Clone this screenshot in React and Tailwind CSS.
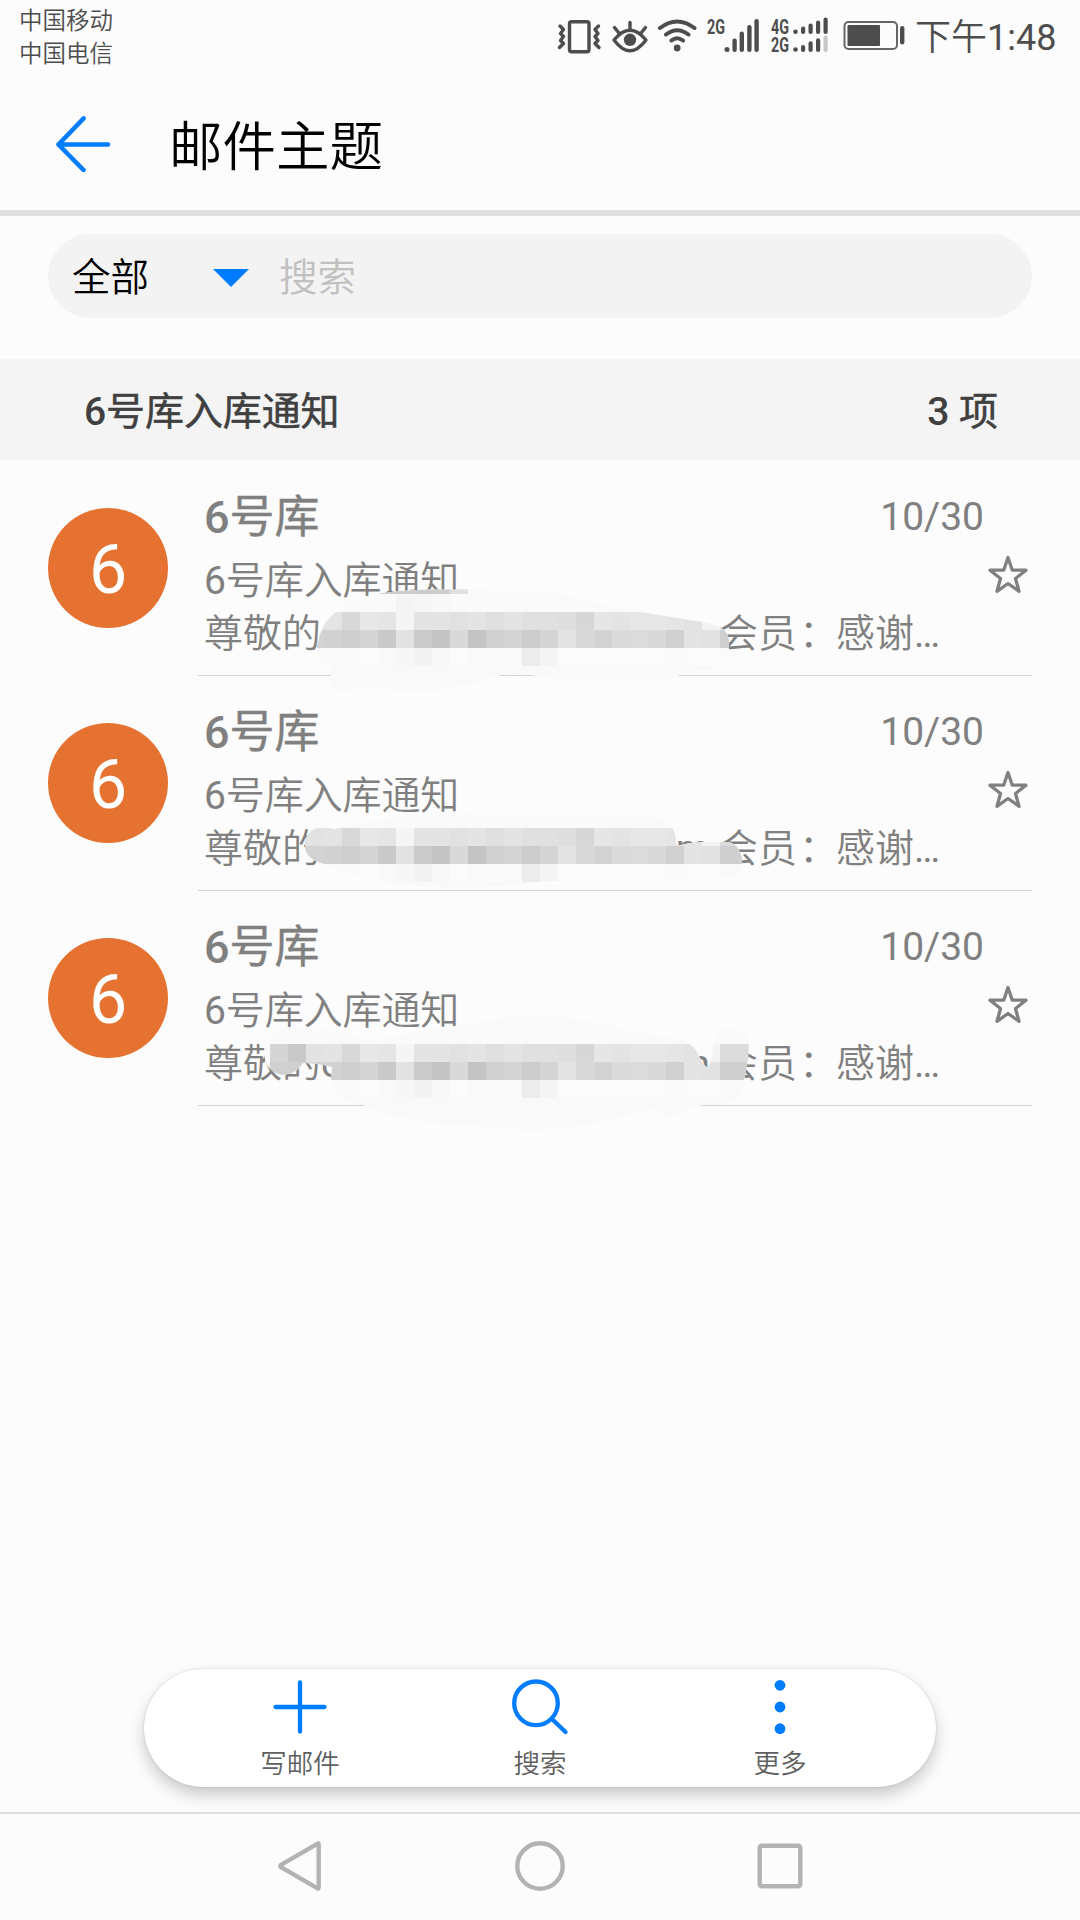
const BLUE = "#007dff"

// Shades of the pixelated mask, one entry per 18px cell
const MASK_COLUMNS = [
  [270, "#d5d5d5", "#d0d0d0", "#fafafa"],
  [288, "#c9c9c9", "#d0d0d0", "#fafafa"],
  [306, "#e2e2e2", "#d3d3d3", "#fafafa"],
  [324, "#e4e4e4", "#d1d1d1", "#fafafa"],
  [342, "#d8d8d8", "#cecece", "#fafafa"],
  [360, "#e7e7e7", "#d5d5d5", "#fbfbfb"],
  [378, "#e5e5e5", "#c9c9c9", "#f9f9f9"],
  [396, "#f5f5f5", "#e2e2e2", "#f7f7f7"],
  [414, "#e4e4e4", "#cbcbcb", "#f3f3f3"],
  [432, "#e4e4e4", "#c4c4c4", "#f8f8f8"],
  [450, "#e1e1e1", "#d9d9d9", "#fbfbfb"],
  [468, "#e4e4e4", "#c4c4c4", "#f9f9f9"],
  [486, "#dfdfdf", "#d0d0d0", "#fafafa"],
  [504, "#e4e4e4", "#d5d5d5", "#f9f9f9"],
  [522, "#e0e0e0", "#cccccc", "#ececec"],
  [540, "#e0e0e0", "#d4d4d4", "#f4f4f4"],
  [558, "#dedede", "#e3e3e3", "#fbfbfb"],
  [576, "#d7d7d7", "#d9d9d9", "#fbfbfb"],
  [594, "#e6e6e6", "#d3d3d3", "#fbfbfb"],
  [612, "#e4e4e4", "#dadada", "#fbfbfb"],
  [630, "#e7e7e7", "#dbdbdb", "#fbfbfb"],
  [648, "#e7e7e7", "#d9d9d9", "#fbfbfb"],
  [666, "#e5e5e5", "#d0d0d0", "#fafafa"],
  [684, "#e3e3e3", "#e4e4e4", "#fbfbfb"],
  [702, "#f3f3f3", "#e2e2e2", "#fbfbfb"],
  [720, "#dcdcdc", "#cfcfcf", "#f9f9f9"],
  [738, "#dcdcdc", "#cfcfcf", "#f9f9f9"],
]

const MAILS = [
  {
    id: "mask-1",
    top: 461,
    cellTop: 612,
    shadow: true,
    before: "",
    after: "",
    outline:
      "M317 645Q321 629 326 622Q334 612 342 608Q350 599 362 597Q390 590 430 589.500L520 590Q560 592 600 604L641 612L702 622Q718 625 723 629Q729 634 729 642L729 650Q722 656 717 663Q712 671 700 671L684 672Q678 676 674 678Q660 681 640 680L590 679Q570 681 550 678Q510 670 490 678Q440 694 400 690Q380 688 365 686Q345 694 334 688Q329 680 331 664Q318 662 317 650Z",
  },
  {
    id: "mask-2",
    top: 676,
    cellTop: 828,
    before: "",
    after: "m",
    outline:
      "M305 845Q306 828 322 827.500Q330 826 334 829.500L345 826Q380 820 400 816Q450 809 480 815Q530 819 580 817L650 817Q675 817 676 842L677 846Q690 842 705 842L728 842Q738 843 742 858L742 866Q738 878 725 877Q690 880 670 880L570 880Q530 882 515 885Q440 890 410 885Q350 876 325 864Q307 860 305 848Z",
  },
  {
    id: "mask-3",
    top: 891,
    cellTop: 1044,
    before: "c",
    after: "m",
    outline:
      "M264 1054Q268 1030 288 1027Q310 1027 330 1030Q360 1037 375 1040Q420 1032 450 1027Q530 1008 600 1023Q650 1036 680 1039Q694 1044 699 1056Q703 1065 708 1068Q712 1060 713 1050Q716 1028 730 1027Q745 1028 749 1040Q749 1060 744 1080Q740 1100 727 1104Q700 1104 688 1108Q672 1120 663 1114Q655 1110 648 1110Q620 1116 600 1122Q550 1132 520 1129Q430 1125 385 1114Q370 1105 350 1102Q330 1092 331 1080L332 1067Q316 1063 303 1063Q296 1075 282 1075Q266 1072 264 1054Z",
  },
]

function VibrateIcon() {
  return (
    <svg className="h-10 w-[46px]" viewBox="556 16 46 40" fill="none" stroke="#4d4d4d" strokeWidth="3.400" strokeLinecap="round" strokeLinejoin="round">
      <rect x="569.500" y="21.700" width="19.500" height="30" rx="2" />
      <path d="M560 26L563.500 29.500L560.500 33.500L563.500 36.500L560.500 40.500L563.500 43.500L559.500 47.500" />
      <path d="M598.500 26L595 29.500L598 33.500L595 36.500L598 40.500L595 43.500L599 47.500" />
    </svg>
  )
}

function EyeIcon() {
  return (
    <svg className="h-10 w-10" viewBox="610 16 40 40" fill="none" stroke="#4d4d4d" strokeWidth="3.400" strokeLinecap="round">
      <path d="M614 40Q630 20.500 646 40Q630 61.500 614 40Z" strokeLinejoin="round" />
      <circle cx="630" cy="39.800" r="6.200" fill="#4d4d4d" stroke="none" />
      <path d="M630 22.500V29M614.500 27.500L618.500 32.500M645.500 27.500L641.500 32.500" />
    </svg>
  )
}

function WifiIcon() {
  return (
    <svg className="h-10 w-10" viewBox="657 16 40 40" fill="none" stroke="#4d4d4d" strokeWidth="4" strokeLinecap="round">
      <path d="M660 28Q677 15 694.500 28M666 34.500Q677 26 688.500 34.500M671.500 40.500Q677 36 683 40.500" />
      <circle cx="677.200" cy="48" r="3.400" fill="#4d4d4d" stroke="none" />
    </svg>
  )
}

function SignalIcon() {
  return (
    <svg className="h-10 w-[54px]" viewBox="706 16 54 40" fill="#4d4d4d">
      <text x="707" y="34" textLength="18" lengthAdjust="spacingAndGlyphs" className="font-['Roboto'] text-[21px] font-bold">2G</text>
      <circle cx="727" cy="49.500" r="2.500" />
      <rect x="732.400" y="38.500" width="4.400" height="13.500" rx="2.200" />
      <rect x="739.600" y="31.500" width="4.400" height="20.500" rx="2.200" />
      <rect x="747.200" y="25" width="4.400" height="27" rx="2.200" />
      <rect x="754.400" y="19" width="4.400" height="33" rx="2.200" />
    </svg>
  )
}

function DualSignalIcon() {
  return (
    <svg className="h-10 w-[60px]" viewBox="770 16 60 40" fill="#4d4d4d">
      <text x="771" y="34" textLength="18" lengthAdjust="spacingAndGlyphs" className="font-['Roboto'] text-[21px] font-bold">4G</text>
      <text x="771" y="52" textLength="18" lengthAdjust="spacingAndGlyphs" className="font-['Roboto'] text-[21px] font-bold">2G</text>
      <circle cx="795.500" cy="31.700" r="2.300" />
      <rect x="801" y="26.500" width="4.200" height="7.500" rx="2.100" />
      <rect x="808.500" y="23.500" width="4.200" height="10.500" rx="2.100" />
      <rect x="816" y="20.500" width="4.200" height="13.500" rx="2.100" />
      <rect x="823.500" y="17.500" width="4.200" height="16.500" rx="2.100" />
      <circle cx="795.500" cy="49.500" r="2.300" />
      <rect x="801" y="45" width="4.200" height="7" rx="2.100" />
      <rect x="808.500" y="41.300" width="4.200" height="10.700" rx="2.100" />
      <rect x="816" y="38.300" width="4.200" height="13.700" rx="2.100" />
      <rect x="823.500" y="35.500" width="4.200" height="16.500" rx="2.100" fill="#c8c8c8" />
    </svg>
  )
}

function BatteryIcon() {
  return (
    <svg className="h-10 w-16" viewBox="842 16 64 40" fill="#4d4d4d">
      <rect x="844.500" y="22" width="52.500" height="27" rx="4" fill="none" stroke="#666666" strokeWidth="2" />
      <rect x="847.500" y="25" width="32.500" height="21" rx="1" />
      <rect x="900" y="26" width="4.400" height="18.500" rx="2.200" />
    </svg>
  )
}

function StatusBar() {
  return (
    <div className="flex h-[72px] items-start pl-[19px] pr-6 text-[#4d4d4d]">
      <div className="pt-[5px] text-[23.500px] leading-[33px] font-[350]">
        <p>中国移动</p>
        <p>中国电信</p>
      </div>
      <div className="ml-auto flex pt-4">
        <VibrateIcon />
        <div className="ml-2 flex">
          <EyeIcon />
        </div>
        <div className="ml-[7px] flex">
          <WifiIcon />
        </div>
        <div className="ml-[9px] flex">
          <SignalIcon />
        </div>
        <div className="ml-[10px] flex">
          <DualSignalIcon />
        </div>
        <div className="ml-3 flex">
          <BatteryIcon />
        </div>
        <p className="ml-[9px] w-[141px] whitespace-nowrap text-[36px] leading-[44px]">
          <span className="font-[350]">下午</span>1:48
        </p>
      </div>
    </div>
  )
}

function Mask({ mail }) {
  return (
    <svg
      className="pointer-events-none absolute left-[260px] h-[130px] w-[500px]"
      style={{ top: mail.cellTop - 32 - mail.top }}
      viewBox={`260 ${mail.cellTop - 32} 500 130`}
    >
      <clipPath id={mail.id}>
        <path d={mail.outline} />
      </clipPath>
      <g clipPath={`url(#${mail.id})`} shapeRendering="crispEdges">
        <rect x="260" y={mail.cellTop - 32} width="500" height="130" fill="#fafafa" />
        {mail.shadow && (
          <>
            <rect x="378" y="588" width="90" height="6" fill="#cdcdcd" />
            <rect x="450" y="588" width="18" height="6" fill="#e0e0e0" />
            <rect x="396" y="594" width="18" height="18" fill="#f4f4f4" />
            <rect x="414" y="594" width="18" height="18" fill="#f6f6f6" />
            <rect x="432" y="594" width="18" height="18" fill="#f8f8f8" />
          </>
        )}
        {MASK_COLUMNS.map(([x, upper, middle, lower]) => (
          <g key={x}>
            <rect x={x} y={mail.cellTop} width="18" height="18" fill={upper} />
            <rect x={x} y={mail.cellTop + 18} width="18" height="18" fill={middle} />
            <rect x={x} y={mail.cellTop + 36} width="18" height="18" fill={lower} />
          </g>
        ))}
        <rect x="260" y={mail.cellTop + 54} width="500" height="60" fill="#f9f9f9" />
      </g>
    </svg>
  )
}

function MailRow({ mail }) {
  return (
    <li className="relative flex h-[215px] pl-12 text-[39px] text-[#808080]">
      <div className="mt-[47px] flex size-[120px] items-center justify-center rounded-full bg-[#e57230] pt-[3px] text-[68px] text-white">6</div>
      <div className="ml-[30px] w-[834px] border-b border-[#d3d3d3] pt-[30px] pl-[6px]">
        <div className="flex justify-between pr-12">
          <h2 className="text-[45px] leading-[54px] [-webkit-text-stroke:0.4px]">
            <span className="font-medium [-webkit-text-stroke:0]">6</span>号库
          </h2>
          <span className="leading-[52px]">10/30</span>
        </div>
        <div className="mt-[9px] flex justify-between pr-[2px]">
          <p className="leading-[54px] tracking-[-0.1px]">
            6<span className="font-[350]">号库入库通知</span>
          </p>
          <svg className="-mt-[2px] size-11" viewBox="0 0 44 44" fill="none" stroke="#808080" strokeWidth="3.300" strokeLinejoin="round">
            <path d="M22 5.500L26.300 18.200H40L29.500 26.500L33 39.300L22 31.500L11 39.300L14.500 26.500L4 18.200H17.700Z" />
          </svg>
        </div>
        <p className="flex leading-[52px] font-[350] whitespace-nowrap">
          <span>尊敬的</span>
          <span className="flex w-[398px] justify-between pr-[9px] font-normal">
            <span>{mail.before}</span>
            <span>{mail.after}</span>
          </span>
          <span>会员</span>
          <span className="relative left-[2px]">：</span>
          <span>感谢</span>
          <span className="font-normal">…</span>
        </p>
      </div>
      <Mask mail={mail} />
    </li>
  )
}

function ToolbarItem({ label, children }) {
  return (
    <button className="flex w-[240px] flex-col items-center pt-[8px]">
      <svg className="h-[60px] w-[60px]" viewBox="0 0 60 60" fill="none" stroke={BLUE} strokeWidth="4.300" strokeLinecap="round">
        {children}
      </svg>
      <span className="mt-[7px] text-[26.500px] leading-[40px] font-[350] text-[#606060]">{label}</span>
    </button>
  )
}

export default function App() {
  return (
    <div className="flex h-[1920px] w-[1080px] flex-col overflow-hidden bg-[#fcfcfc] font-['Roboto','Noto_Sans_CJK_SC',sans-serif]">
      <StatusBar />

      <header className="flex h-36 items-center border-b-[6px] border-[#e0e0e0] pl-[55px]">
        <svg className="mt-[5px] h-14 w-14" viewBox="0 0 56 56" fill="none" stroke={BLUE} strokeWidth="4.600" strokeLinecap="round" strokeLinejoin="round">
          <path d="M28.500 2.500L3.500 28.500L28.500 54M3.500 28.500H53" />
        </svg>
        <h1 className="mt-[14px] ml-[58px] text-[53.500px] leading-[60px] font-[350] text-black">邮件主题</h1>
      </header>

      <div className="mx-12 mt-[18px] flex h-[84px] items-center rounded-full bg-[#f3f3f3] pt-[3px] pl-6 text-[38.500px] font-[350]">
        <span className="text-black">全部</span>
        <svg className="ml-16 h-[18px] w-9" viewBox="0 0 36 18">
          <path d="M0 0H36L18 18Z" fill={BLUE} />
        </svg>
        <span className="ml-[30px] text-[#c0c0c0]">搜索</span>
      </div>

      <div className="mt-[41px] flex h-[101px] items-center justify-between bg-[#f4f4f4] pt-[6px] pr-[82px] pl-[84px] text-[39px] text-[#404040]">
        <span className="tracking-[-0.1px] [-webkit-text-stroke:0.5px]">
          <span className="font-medium [-webkit-text-stroke:0]">6</span>号库入库通知
        </span>
        <span className="[-webkit-text-stroke:0.5px]">
          <span className="font-medium [-webkit-text-stroke:0]">3</span> 项
        </span>
      </div>

      <ul className="mt-px">
        {MAILS.map((mail) => (
          <MailRow key={mail.id} mail={mail} />
        ))}
      </ul>

      <div className="mx-auto mt-auto mb-[25px] flex h-[118px] w-[792px] shrink-0 justify-center rounded-full bg-white shadow-[0_0_2px_rgba(0,0,0,0.18),0_8px_16px_rgba(0,0,0,0.2)]">
        <ToolbarItem label="写邮件">
          <path d="M30 5.500V54.500M5.500 30H54.500" />
        </ToolbarItem>
        <ToolbarItem label="搜索">
          <circle cx="26" cy="26.300" r="21.800" />
          <path d="M42 42L55.500 55" />
        </ToolbarItem>
        <ToolbarItem label="更多">
          <g fill={BLUE} stroke="none">
            <circle cx="30" cy="8.300" r="5.400" />
            <circle cx="30" cy="30" r="5.400" />
            <circle cx="30" cy="51.700" r="5.400" />
          </g>
        </ToolbarItem>
      </div>

      <nav className="flex h-[108px] shrink-0 justify-center border-t-2 border-[#e0e0e0]">
        <div className="flex w-[240px] justify-center pt-6">
          <svg className="size-14" viewBox="0 0 56 56" fill="none" stroke="#b3b3b3" strokeWidth="4.400" strokeLinejoin="round">
            <path d="M46.700 6.500V49.500Q46.700 51 45.200 50.200L9 29.200Q7.500 28 9 26.800L45.200 5.800Q46.700 5 46.700 6.500Z" />
          </svg>
        </div>
        <div className="flex w-[240px] justify-center pt-6">
          <svg className="size-14" viewBox="0 0 56 56" fill="none" stroke="#b3b3b3" strokeWidth="4.400">
            <circle cx="28" cy="28" r="22.700" />
          </svg>
        </div>
        <div className="flex w-[240px] justify-center pt-6">
          <svg className="size-14" viewBox="0 0 56 56" fill="none" stroke="#b3b3b3" strokeWidth="4.400">
            <rect x="7.700" y="7.700" width="40.600" height="40.600" rx="2" />
          </svg>
        </div>
      </nav>
    </div>
  )
}
